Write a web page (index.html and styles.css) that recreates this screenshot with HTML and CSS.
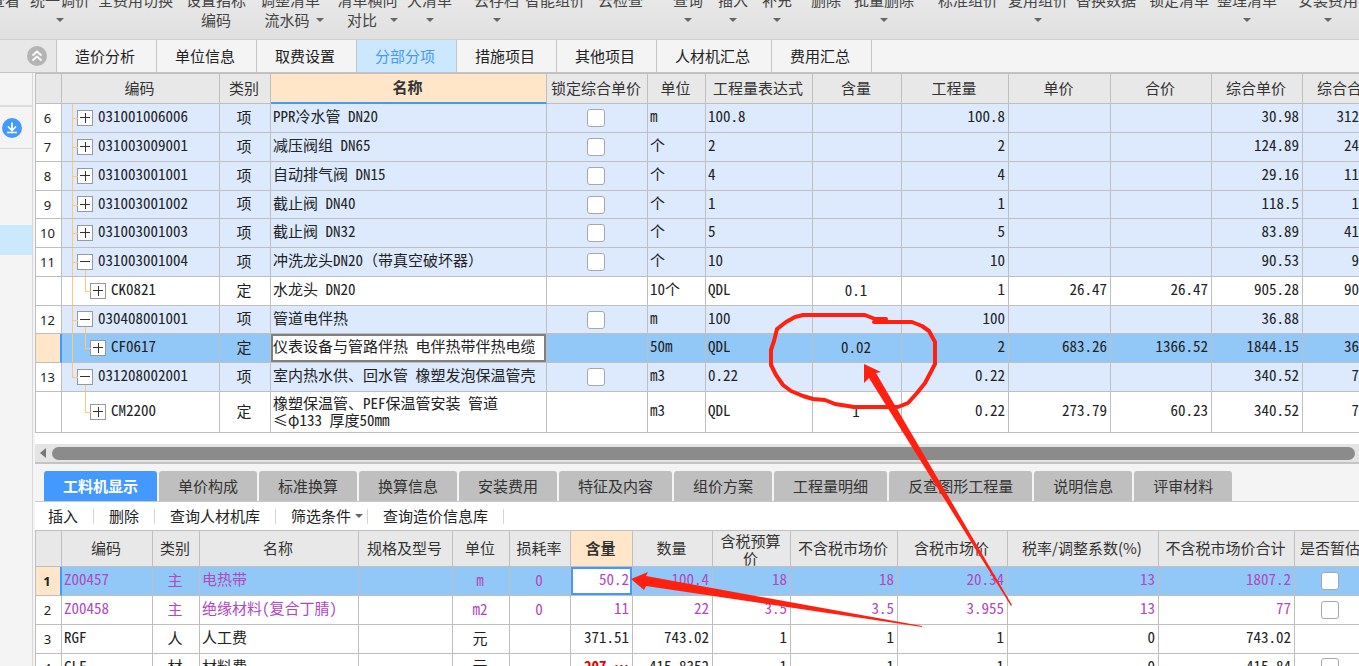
FILE: index.html
```html
<!DOCTYPE html>
<html lang="zh-CN">
<head>
<meta charset="utf-8">
<title>分部分项</title>
<link rel="stylesheet" href="styles.css">
</head>
<body>
<div class="app">
  <header class="ribbon">
    <button class="tool tool-end">查看</button>
    <button class="tool">统一调价<span class="line"><i class="caret"></i></span></button>
    <button class="tool">全费用切换</button>
    <button class="tool">设置指标<span class="line">编码</span></button>
    <button class="tool">调整清单<span class="line wide">流水码<i class="caret"></i></span></button>
    <button class="tool">清单横向<span class="line spread">对比<i class="caret"></i></span></button>
    <button class="tool">大清单<span class="line"><i class="caret"></i></span></button>
    <button class="tool">云存档<span class="line"><i class="caret"></i></span></button>
    <button class="tool">智能组价</button>
    <button class="tool">云检查</button>
    <button class="tool">查询<span class="line"><i class="caret"></i></span></button>
    <button class="tool">插入<span class="line"><i class="caret"></i></span></button>
    <button class="tool">补充<span class="line"><i class="caret"></i></span></button>
    <button class="tool">删除</button>
    <button class="tool">批量删除<span class="line"><i class="caret"></i></span></button>
    <button class="tool">标准组价</button>
    <button class="tool">复用组价<span class="line"><i class="caret"></i></span></button>
    <button class="tool">替换数据</button>
    <button class="tool">锁定清单</button>
    <button class="tool">整理清单<span class="line"><i class="caret"></i></span></button>
    <button class="tool">安装费用<span class="line"><i class="caret"></i></span></button>
  </header>

  <nav class="tabs">
    <div class="collapse">
      <button class="round" aria-label="收起">
        <svg width="20" height="20" viewBox="0 0 20 20"><circle cx="10" cy="10" r="10" fill="#b4b4b4"/><path d="M5.5 9.5 10 5.5l4.500 4M5.500 14.500 10 10.500l4.500 4" fill="none" stroke="#fff" stroke-width="1.700"/></svg>
      </button>
    </div>
    <button class="tab">造价分析</button>
    <button class="tab">单位信息</button>
    <button class="tab">取费设置</button>
    <button class="tab active">分部分项</button>
    <button class="tab">措施项目</button>
    <button class="tab">其他项目</button>
    <button class="tab">人材机汇总</button>
    <button class="tab">费用汇总</button>
  </nav>

  <div class="work">
    <aside class="side">
      <div class="side-head"></div>
      <div class="side-tool">
        <button class="round" aria-label="展开">
          <svg width="20" height="20" viewBox="0 0 20 20"><circle cx="10" cy="10" r="10" fill="#4499ff"/><path d="M10 4.500v8M6 8.500l4 4 4-4M5 14.500h10" fill="none" stroke="#fff" stroke-width="1.700"/></svg>
        </button>
      </div>
      <div class="side-selected"></div>
    </aside>

    <main class="main">
      <div class="upper">
        <table class="grid bill">
          <colgroup><col class="b-no"><col class="b-code"><col class="b-kind"><col class="b-name"><col class="b-lock"><col class="b-unit"><col class="b-expr"><col class="b-cont"><col class="b-qty"><col class="b-price"><col class="b-sum"><col class="b-comp"><col></colgroup>
          <thead><tr><th></th><th>编码</th><th>类别</th><th class="current">名称</th><th>锁定综合单价</th><th>单位</th><th>工程量表达式</th><th>含量</th><th>工程量</th><th>单价</th><th>合价</th><th>综合单价</th><th class="cut-head">综合合价</th></tr></thead>
          <tbody>
            <tr class="item"><td class="no">6</td><td class="code root"><button class="node plus" aria-label="展开"></button>031001006006</td><td class="mid">项</td><td>PPR冷水管 DN20</td><td class="mid"><input type="checkbox" aria-label="锁定综合单价"></td><td>m</td><td>100.8</td><td></td><td class="num">100.8</td><td></td><td></td><td class="num">30.98</td><td class="cut">312</td></tr>
            <tr class="item"><td class="no">7</td><td class="code root"><button class="node plus" aria-label="展开"></button>031003009001</td><td class="mid">项</td><td>减压阀组 DN65</td><td class="mid"><input type="checkbox" aria-label="锁定综合单价"></td><td>个</td><td>2</td><td></td><td class="num">2</td><td></td><td></td><td class="num">124.89</td><td class="cut">24</td></tr>
            <tr class="item"><td class="no">8</td><td class="code root"><button class="node plus" aria-label="展开"></button>031003001001</td><td class="mid">项</td><td>自动排气阀 DN15</td><td class="mid"><input type="checkbox" aria-label="锁定综合单价"></td><td>个</td><td>4</td><td></td><td class="num">4</td><td></td><td></td><td class="num">29.16</td><td class="cut">11</td></tr>
            <tr class="item"><td class="no">9</td><td class="code root"><button class="node plus" aria-label="展开"></button>031003001002</td><td class="mid">项</td><td>截止阀 DN40</td><td class="mid"><input type="checkbox" aria-label="锁定综合单价"></td><td>个</td><td>1</td><td></td><td class="num">1</td><td></td><td></td><td class="num">118.5</td><td class="cut">1</td></tr>
            <tr class="item"><td class="no">10</td><td class="code root"><button class="node plus" aria-label="展开"></button>031003001003</td><td class="mid">项</td><td>截止阀 DN32</td><td class="mid"><input type="checkbox" aria-label="锁定综合单价"></td><td>个</td><td>5</td><td></td><td class="num">5</td><td></td><td></td><td class="num">83.89</td><td class="cut">41</td></tr>
            <tr class="item"><td class="no">11</td><td class="code root open"><button class="node" aria-label="收起"></button>031003001004</td><td class="mid">项</td><td>冲洗龙头DN20（带真空破坏器）</td><td class="mid"><input type="checkbox" aria-label="锁定综合单价"></td><td>个</td><td>10</td><td></td><td class="num">10</td><td></td><td></td><td class="num">90.53</td><td class="cut">9</td></tr>
            <tr><td class="no"></td><td class="code child through"><button class="node plus" aria-label="展开"></button>CK0821</td><td class="mid">定</td><td>水龙头 DN20</td><td></td><td>10个</td><td>QDL</td><td class="mid">0.1</td><td class="num">1</td><td class="num">26.47</td><td class="num">26.47</td><td class="num">905.28</td><td class="cut">90</td></tr>
            <tr class="item"><td class="no">12</td><td class="code root open"><button class="node" aria-label="收起"></button>030408001001</td><td class="mid">项</td><td>管道电伴热</td><td class="mid"><input type="checkbox" aria-label="锁定综合单价"></td><td>m</td><td>100</td><td></td><td class="num">100</td><td></td><td></td><td class="num">36.88</td><td></td></tr>
            <tr class="selected"><td class="no"></td><td class="code child through"><button class="node plus" aria-label="展开"></button>CF0617</td><td class="mid">定</td><td class="editing">仪表设备与管路伴热 电伴热带伴热电缆</td><td></td><td>50m</td><td>QDL</td><td class="mid">0.02</td><td class="num">2</td><td class="num">683.26</td><td class="num">1366.52</td><td class="num">1844.15</td><td class="cut">36</td></tr>
            <tr class="item"><td class="no">13</td><td class="code root open last"><button class="node" aria-label="收起"></button>031208002001</td><td class="mid">项</td><td>室内热水供、回水管 橡塑发泡保温管壳</td><td class="mid"><input type="checkbox" aria-label="锁定综合单价"></td><td>m3</td><td>0.22</td><td></td><td class="num">0.22</td><td></td><td></td><td class="num">340.52</td><td class="cut">7</td></tr>
            <tr class="tall"><td class="no"></td><td class="code child"><button class="node plus" aria-label="展开"></button>CM2200</td><td class="mid">定</td><td class="two">橡塑保温管、PEF保温管安装 管道<br>≤φ133 厚度50mm</td><td></td><td>m3</td><td>QDL</td><td class="mid">1</td><td class="num">0.22</td><td class="num">273.79</td><td class="num">60.23</td><td class="num">340.52</td><td class="cut">7</td></tr>
          </tbody>
        </table>
      </div>

      <div class="scroll"><i class="scroll-arrow"></i><div class="thumb"></div></div>

      <nav class="subtabs">
        <button class="subtab on">工料机显示</button>
        <button class="subtab">单价构成</button>
        <button class="subtab">标准换算</button>
        <button class="subtab">换算信息</button>
        <button class="subtab">安装费用</button>
        <button class="subtab">特征及内容</button>
        <button class="subtab">组价方案</button>
        <button class="subtab">工程量明细</button>
        <button class="subtab">反查图形工程量</button>
        <button class="subtab">说明信息</button>
        <button class="subtab">评审材料</button>
      </nav>

      <div class="actions">
        <button class="action">插入</button>
        <button class="action">删除</button>
        <button class="action">查询人材机库</button>
        <button class="action menu">筛选条件<i class="caret"></i></button>
        <button class="action">查询造价信息库</button>
      </div>

      <table class="grid parts">
        <colgroup><col class="b-no"><col class="p-code"><col class="p-kind"><col class="p-name"><col class="p-spec"><col class="p-unit"><col class="p-loss"><col class="p-cont"><col class="p-qty"><col class="p-budget"><col class="p-net"><col class="p-gross"><col class="p-rate"><col class="p-total"><col></colgroup>
        <thead><tr><th></th><th>编码</th><th>类别</th><th>名称</th><th>规格及型号</th><th>单位</th><th>损耗率</th><th class="current">含量</th><th>数量</th><th class="two">含税预算<br>价</th><th>不含税市场价</th><th>含税市场价</th><th>税率/调整系数(%)</th><th>不含税市场价合计</th><th class="cut-head">是否暂估</th></tr></thead>
        <tbody>
          <tr class="selected main-mat"><td class="no">1</td><td>Z00457</td><td class="mid">主</td><td>电热带</td><td></td><td class="mid">m</td><td class="mid">0</td><td class="num focus">50.2</td><td class="num">100.4</td><td class="num">18</td><td class="num">18</td><td class="num">20.34</td><td class="num">13</td><td class="num">1807.2</td><td class="est"><input type="checkbox" aria-label="是否暂估"></td></tr>
          <tr class="main-mat"><td class="no">2</td><td>Z00458</td><td class="mid">主</td><td>绝缘材料(复合丁腈)</td><td></td><td class="mid">m2</td><td class="mid">0</td><td class="num">11</td><td class="num">22</td><td class="num">3.5</td><td class="num">3.5</td><td class="num">3.955</td><td class="num">13</td><td class="num">77</td><td class="est"><input type="checkbox" aria-label="是否暂估"></td></tr>
          <tr><td class="no">3</td><td>RGF</td><td class="mid">人</td><td>人工费</td><td></td><td class="mid">元</td><td></td><td class="num">371.51</td><td class="num">743.02</td><td class="num">1</td><td class="num">1</td><td class="num">1</td><td class="num">0</td><td class="num">743.02</td><td></td></tr>
          <tr><td class="no">4</td><td>CLF</td><td class="mid">材</td><td>材料费</td><td></td><td class="mid">元</td><td></td><td class="num changed">207.⋯</td><td class="num">415.8352</td><td class="num">1</td><td class="num">1</td><td class="num">1</td><td class="num">0</td><td class="num">415.84</td><td class="est"><input type="checkbox" aria-label="是否暂估"></td></tr>
        </tbody>
      </table>
    </main>
  </div>

  <svg class="marks" width="1359" height="666" viewBox="0 0 1359 666" aria-hidden="true">
    <path d="M886 319H875L865 315H803L795 317 786 322 777 329 774 341 771 350V365L776 375 783 385 791 391 803 396 813 399 825 400 835 404 848 406 854 407H898L908 403 917 393 925 383 935 364V342L929 331 922 326 912 322H874" fill="none" stroke="#ff2010" stroke-width="4" stroke-linejoin="round" stroke-linecap="round"/>
    <path d="M864 364 881 372 876 373 1012 605 1011 606 869 378 864 383ZM631 579 648 572 646 576 922 626V627L646 586 644 590Z" fill="#ff2010"/>
  </svg>
</div>
</body>
</html>
```
FILE: styles.css
```css
* { box-sizing: border-box; }

body {
  margin: 0;
  overflow: hidden;
  background: #f4f4f4;
  color: #222;
  font: 15px/20px "Noto Sans CJK SC", sans-serif;
}

button {
  margin: 0;
  padding: 0;
  border: 0;
  background: none;
  color: inherit;
  font: inherit;
  white-space: nowrap;
}

.app {
  position: relative;
  display: flex;
  flex-direction: column;
  height: 100vh;
  overflow: hidden;
}

/* Ribbon */
.ribbon {
  display: grid;
  grid-template-columns: 30px 68px 88px 74px 77px 70px 67px 51px 73px 75px 45px 44px 49px 43px 84px 70px 68px 73px 68px 81px 1fr;
  align-content: end;
  flex: none;
  height: 40px;
  padding-bottom: 9px;
  overflow: hidden;
  border-bottom: 1px solid #d0d0d0;
  background: linear-gradient(#e8e8e8, #e0e0e0);
  color: #444;
}

.tool {
  display: flex;
  flex-direction: column;
  align-items: center;
  justify-self: start;
  height: 40px;
}

.tool-end { justify-self: end; padding-right: 10px; }

.line {
  display: flex;
  align-items: center;
  justify-content: center;
  height: 20px;
}

.line.wide { gap: 6px; margin-right: -8px; }
.line.spread { gap: 13px; padding-left: 10px; }

.caret {
  border: 4px solid transparent;
  border-top-color: #666;
  border-bottom: 0;
}

/* Module tabs */
.tabs {
  display: flex;
  flex: none;
  height: 33px;
  border-bottom: 1px solid #c4c4c4;
}

.collapse {
  display: flex;
  align-items: center;
  width: 57px;
  padding-left: 27px;
  border-right: 1px solid #c4c4c4;
  background: #e8e8e8;
}

.round { display: block; width: 20px; height: 20px; }
.round svg { display: block; }

.tab {
  padding: 0 21px 0 18px;
  border-right: 1px solid #c4c4c4;
}

.tab.active { background: #cce8ff; color: #4499ff; }

/* Work area */
.work { display: flex; flex: 1; min-height: 0; }

.side {
  flex: none;
  width: 33px;
  border-right: 1px solid #d8d8d8;
}

.side-head { height: 34px; border-bottom: 2px solid #dcdcdc; }

.side-tool {
  display: flex;
  align-items: center;
  height: 42px;
  padding-left: 2px;
  border-bottom: 1px solid #d8d8d8;
}

.side-selected { height: 30px; margin-top: 76px; background: #cce8ff; }

.main { flex: 1; min-width: 0; padding-left: 2px; }

.upper { height: 371px; background: #fff; }

/* Data grids */
.grid {
  width: 100%;
  table-layout: fixed;
  border-collapse: separate;
  border-spacing: 0;
  border-left: 1px solid #bfbfbf;
  border-top: 1px solid #bfbfbf;
  background: #fff;
}

.grid th {
  padding: 0 2px 2px 0;
  border-right: 1px solid #bfbfbf;
  border-bottom: 1px solid #bfbfbf;
  background: #e8e8e8;
  color: #333;
  font-weight: 400;
  white-space: nowrap;
}

.grid th.current { background: #ffe6c8; font-weight: 700; }

.grid td {
  height: 29px;
  padding: 0 3px 4px 2px;
  overflow: hidden;
  border-right: 1px solid #bfbfbf;
  border-bottom: 1px solid #bfbfbf;
  font-family: "Noto Sans Mono CJK SC", "Noto Sans CJK SC", monospace;
  white-space: nowrap;
}

.grid tr > :last-child { border-right: 0; }

.grid tr:nth-child(4n) td { height: 28px; }
.bill th { height: 30px; }
.parts th { height: 36px; }
.bill th.current { border-bottom: 2px solid #4499ff; }
.bill .tall td { height: 41px; }

.grid .two { padding-bottom: 0; line-height: 17px; }
.grid td.two { padding-bottom: 2px; }
.grid td.mid { padding: 0 2px 3px 0; text-align: center; }
.grid td.num { text-align: right; }
.grid td.cut { padding-right: 0; text-align: right; }
.grid th.cut-head { padding-left: 14px; overflow: hidden; text-align: left; text-overflow: clip; }
.parts th.cut-head { padding-left: 5px; }
.grid td.no { padding: 0 2px 0 0; background: #fff; font: 13px/20px "Noto Sans", sans-serif; text-align: center; }

.item td { background: #ddeafe; }
.grid .selected td { background: #92c8f7; }
.grid .selected td.no { border-right: 2px solid #4499ff; background: #ffe6c8; font-weight: 700; }
.grid .selected td.editing { background: #fff; box-shadow: inset 0 0 0 2px #808080; }
.grid .selected td.focus { background: #fff; box-shadow: inset 0 0 0 2px #4499ff; }
.main-mat td { color: #b048c0; }
.main-mat td.no { color: #222; }
.grid td.changed { color: #e60000; font-weight: 700; }

input[type="checkbox"] {
  display: block;
  width: 18px;
  height: 18px;
  margin: 3px auto 0;
  appearance: none;
  border: 1px solid #a8a8a8;
  border-radius: 3px;
  background: #fff;
}

.grid td.est { padding-left: 26px; }
.est input { margin-left: 0; }

/* Tree column */
.grid td.code { position: relative; }
.grid td.root { padding-left: 15px; }
.grid td.child { padding-left: 28px; }

.node {
  width: 16px;
  height: 16px;
  margin-right: 5px;
  border: 1px solid #999;
  background: linear-gradient(#333, #333) center / 10px 1px no-repeat, #fff;
  vertical-align: middle;
}

.node.plus {
  background: linear-gradient(#333, #333) center / 10px 1px no-repeat, linear-gradient(#333, #333) center / 1px 10px no-repeat, #fff;
}

.root::before,
.child::before {
  position: absolute;
  top: 0;
  left: 10px;
  width: 5px;
  height: 50%;
  border-left: 1px solid #ffc878;
  border-bottom: 1px solid #ffc878;
  content: "";
}

.child::before { left: 23px; }

.root:not(.last)::after,
.through::after {
  position: absolute;
  top: 0;
  bottom: -1px;
  left: 10px;
  border-left: 1px solid #ffc878;
  content: "";
}

.item td.open { background: linear-gradient(#ffc878, #ffc878) 23px 100% / 1px 7px no-repeat #ddeafe; }

.b-no { width: 26px; }
.b-code { width: 158px; }
.b-kind { width: 51px; }
.b-name { width: 276px; }
.b-lock { width: 101px; }
.b-unit { width: 58px; }
.b-expr { width: 107px; }
.b-cont { width: 89px; }
.b-qty { width: 107px; }
.b-price { width: 102px; }
.b-sum { width: 101px; }
.b-comp { width: 91px; }

.p-code { width: 91px; }
.p-kind { width: 47px; }
.p-name { width: 159px; }
.p-spec { width: 94px; }
.p-unit { width: 57px; }
.p-loss { width: 61px; }
.p-cont { width: 62px; }
.p-qty { width: 80px; }
.p-budget { width: 78px; }
.p-net { width: 107px; }
.p-gross { width: 110px; }
.p-rate { width: 151px; }
.p-total { width: 136px; }

/* Horizontal scroll bar */
.scroll {
  display: flex;
  align-items: center;
  gap: 6px;
  height: 20px;
  padding: 0 4px 0 5px;
  border-bottom: 2px solid #c4c4c4;
  background: #e4e4e4;
}

.scroll-arrow {
  border: 5px solid transparent;
  border-right: 6px solid #777;
  border-left: 0;
}

.thumb { flex: 1; height: 13px; border-radius: 7px; background: #8b8b8b; }

/* Detail tabs */
.subtabs {
  display: flex;
  gap: 2px;
  padding: 7px 0 0 9px;
  border-bottom: 1px solid #c8c8c8;
}

.subtab {
  height: 30px;
  padding: 0 19px;
  border-radius: 3px 3px 0 0;
  background: #bfbfbf;
  color: #333;
}

.subtab.on { background: #4499ff; color: #fff; font-weight: 700; }

.actions {
  display: flex;
  align-items: center;
  height: 28px;
  background: #fff;
}

.action {
  display: flex;
  align-items: center;
  height: 15px;
  padding: 0 15px;
  border-right: 1px solid #d0d8dc;
}

.action:first-child { padding-left: 13px; }
.action.menu { gap: 4px; padding-right: 4px; }

/* Hand-drawn notes lie over both grids */
.marks {
  position: absolute;
  top: 0;
  left: 0;
  pointer-events: none;
}
```
